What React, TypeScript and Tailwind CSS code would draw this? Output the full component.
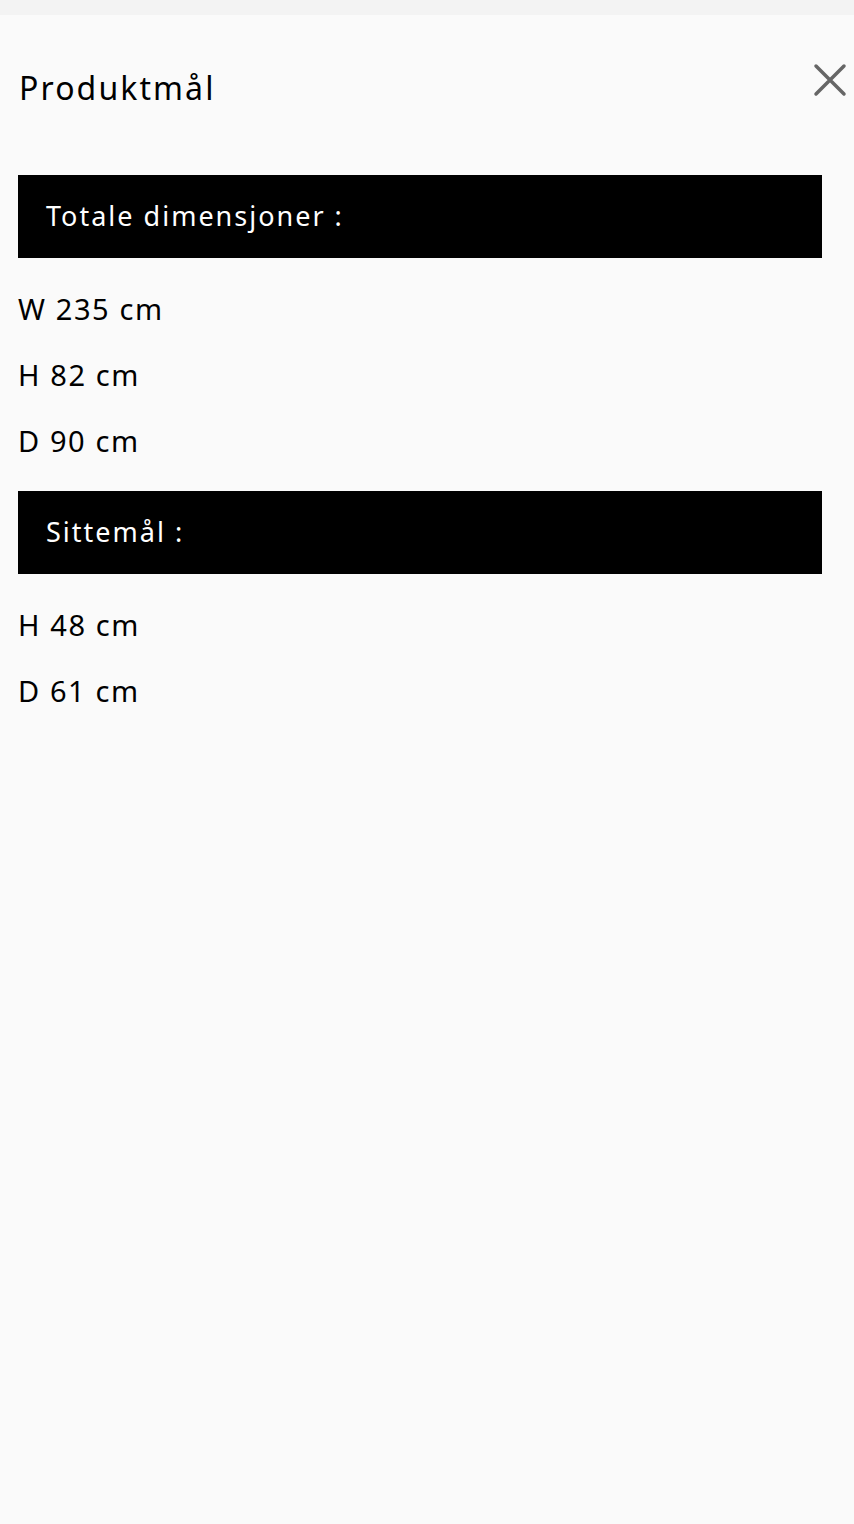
import React from "react";

const rows1 = ["W 235 cm", "H 82 cm", "D 90 cm"];
const rows2 = ["H 48 cm", "D 61 cm"];

function Bar({ label }: { label: string }) {
  return (
    <div className="mr-[32px] flex h-[83px] items-center bg-black pl-[28px] text-[27px] tracking-[2px] text-white">
      {label}
    </div>
  );
}

function Row({ text }: { text: string }) {
  return <div className="flex h-[66px] items-center text-[29px] tracking-[1.6px] text-black">{text}</div>;
}

export default function App() {
  return (
    <div className="min-h-[1524px] bg-[#fafafa]" style={{ fontFamily: "'Noto Sans', sans-serif" }}>
      <div className="h-[15px] bg-[#f3f3f3]" />
      <div className="flex items-start justify-between pl-[19px] pr-[6px] pt-[47px]">
        <h1 className="pt-[6px] text-[32px] leading-[40px] tracking-[2.1px] text-black">Produktmål</h1>
        <svg width="36" height="36" viewBox="0 0 36 36">
          <path d="M4 4 L32 32 M32 4 L4 32" stroke="#666" strokeWidth="3.5" strokeLinecap="round" />
        </svg>
      </div>
      <div className="mt-[67px] pl-[18px]">
        <Bar label="Totale dimensjoner :" />
        <div className="pt-[18px]">
          {rows1.map((r) => (
            <Row key={r} text={r} />
          ))}
        </div>
        <div className="mt-[17px]">
          <Bar label="Sittemål :" />
        </div>
        <div className="pt-[18px]">
          {rows2.map((r) => (
            <Row key={r} text={r} />
          ))}
        </div>
      </div>
    </div>
  );
}
